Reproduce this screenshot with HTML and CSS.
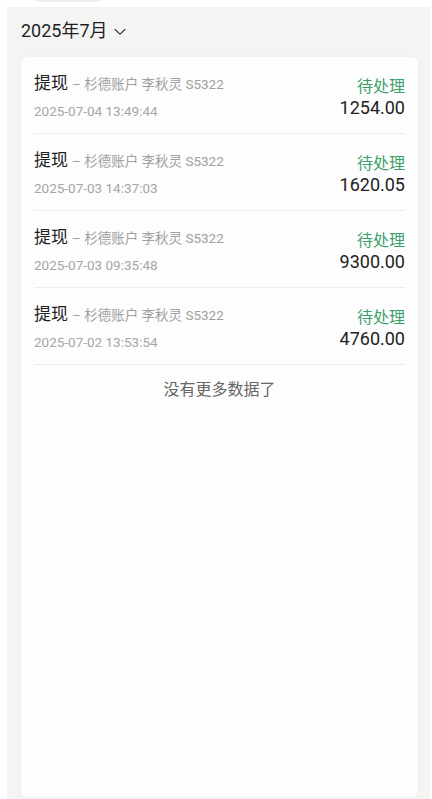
FILE: index.html
```html
<!DOCTYPE html>
<html lang="zh-CN">
<head>
<meta charset="utf-8">
<meta name="viewport" content="width=device-width, initial-scale=1">
<title>提现记录</title>
<link rel="stylesheet" href="styles.css">
</head>
<body>
<div class="topline"></div>
<div class="panel">
  <div class="month">
    <span class="month-text">2025年7月</span>
    <svg class="chev" width="12" height="8" viewBox="0 0 12 8"><path d="M1 1.5 L6 6.2 L11 1.5" fill="none" stroke="#333" stroke-width="1.1" stroke-linecap="round" stroke-linejoin="round"/></svg>
  </div>
  <div class="card">
    <div class="row">
      <div class="left">
        <div class="title"><span class="kind">提现</span><span class="sub">– 杉德账户 李秋灵 S5322</span></div>
        <div class="date">2025-07-04 13:49:44</div>
      </div>
      <div class="right">
        <div class="status">待处理</div>
        <div class="amount">1254.00</div>
      </div>
    </div>
    <div class="row">
      <div class="left">
        <div class="title"><span class="kind">提现</span><span class="sub">– 杉德账户 李秋灵 S5322</span></div>
        <div class="date">2025-07-03 14:37:03</div>
      </div>
      <div class="right">
        <div class="status">待处理</div>
        <div class="amount">1620.05</div>
      </div>
    </div>
    <div class="row">
      <div class="left">
        <div class="title"><span class="kind">提现</span><span class="sub">– 杉德账户 李秋灵 S5322</span></div>
        <div class="date">2025-07-03 09:35:48</div>
      </div>
      <div class="right">
        <div class="status">待处理</div>
        <div class="amount">9300.00</div>
      </div>
    </div>
    <div class="row">
      <div class="left">
        <div class="title"><span class="kind">提现</span><span class="sub">– 杉德账户 李秋灵 S5322</span></div>
        <div class="date">2025-07-02 13:53:54</div>
      </div>
      <div class="right">
        <div class="status">待处理</div>
        <div class="amount">4760.00</div>
      </div>
    </div>
    <div class="nomore">没有更多数据了</div>
  </div>
</div>
</body>
</html>
```
FILE: styles.css
```css
* { box-sizing: border-box; }
html, body {
  margin: 0;
  padding: 0;
  background: #ffffff;
  font-family: "Roboto", "Noto Sans CJK SC", sans-serif;
  color: #222;
}
body {
  height: 799px;
  overflow: hidden;
}
.topline {
  margin-left: 36px;
  width: 64px;
  height: 2px;
  background: #eeeeee;
  border-radius: 0 0 2px 2px;
}
.panel {
  margin: 5px 2px 0 7px;
  background: #f4f5f3;
  height: 800px;
  padding: 12px 12px 0 14px;
}
.month {
  display: flex;
  align-items: center;
  height: 24px;
  gap: 6px;
}
.month-text {
  font-size: 18px;
  line-height: 24px;
  color: #1f1f1f;
}
.chev {
  margin-top: 2px;
}
.card {
  margin-top: 14px;
  background: #fdfdfd;
  border-radius: 7px;
  height: 740px;
  padding: 0 13px;
  box-shadow: 0 0 8px rgba(0, 0, 0, 0.025);
}
.row {
  display: flex;
  justify-content: space-between;
  align-items: center;
  height: 77px;
  border-bottom: 1px solid #ececec;
}
.left {
  display: flex;
  flex-direction: column;
  gap: 5px;
  padding-top: 1px;
}
.title {
  display: flex;
  align-items: baseline;
  line-height: 24px;
}
.kind {
  font-size: 17px;
  color: #1f1f1f;
}
.sub {
  font-size: 13.5px;
  color: #a0a0a0;
  margin-left: 4px;
}
.date {
  font-size: 13.5px;
  line-height: 20px;
  color: #a6a6a6;
}
.right {
  display: flex;
  flex-direction: column;
  align-items: flex-end;
  padding-top: 3px;
}
.status {
  font-size: 16px;
  line-height: 22px;
  color: #3b9f6b;
}
.amount {
  font-size: 18px;
  line-height: 20px;
  color: #222;
}
.nomore {
  text-align: center;
  font-size: 16px;
  color: #666;
  line-height: 24px;
  padding-top: 13px;
}
```
